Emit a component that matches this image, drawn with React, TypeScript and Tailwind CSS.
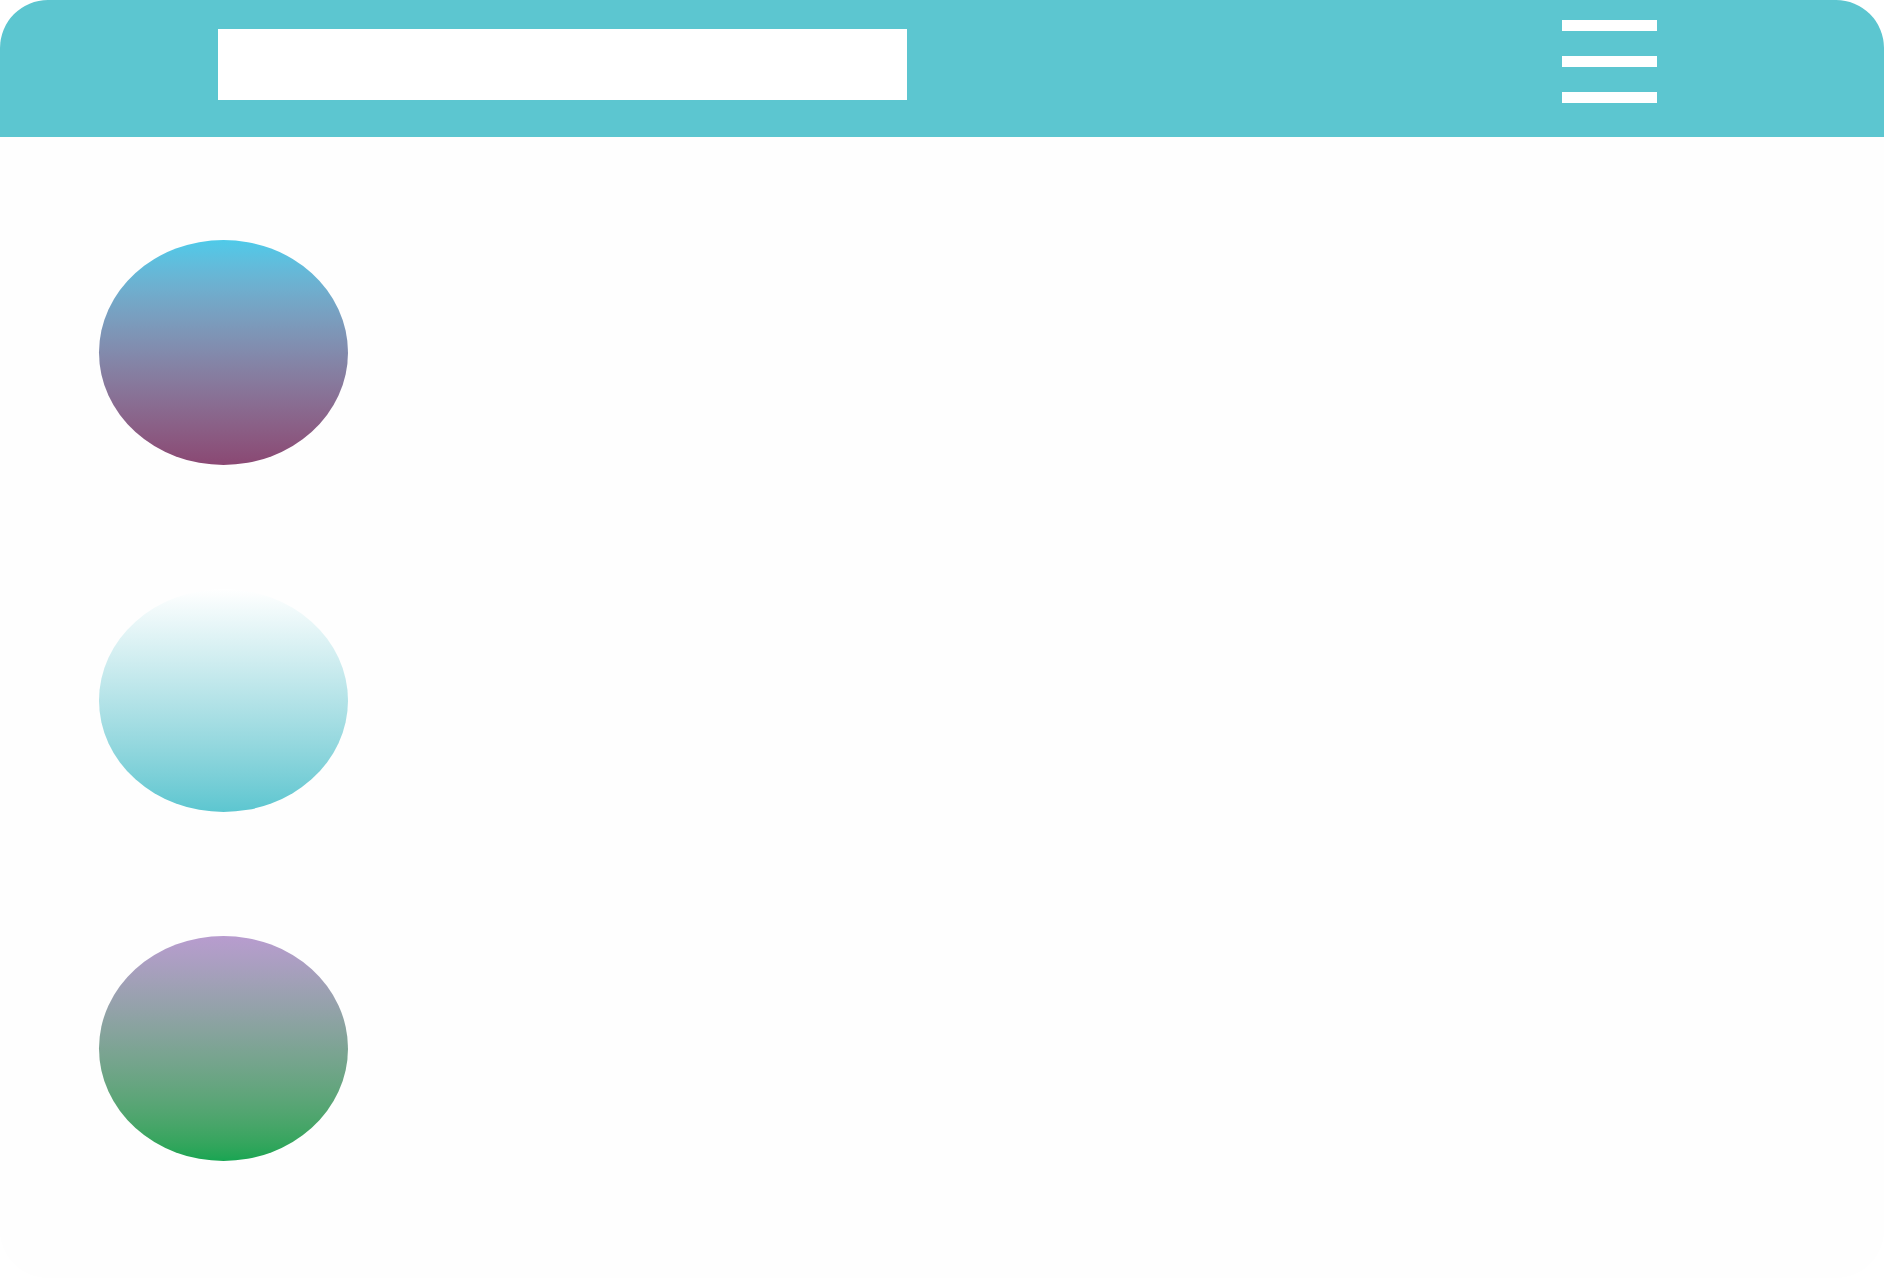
export default function App() {
  return (
    <div className="w-[1884px] h-[1278px] bg-white">
      <div className="w-full h-full rounded-[48px] overflow-hidden bg-[#fefefe] flex flex-col">
        {/* Header */}
        <header className="h-[137px] shrink-0 bg-[#5cc6d0] flex items-start pl-[218px] pr-[227px]">
          <div className="mt-[29px] w-[689px] h-[71px] bg-white"></div>
          <div className="ml-auto mt-[20px] w-[95px] flex flex-col gap-[25px]">
            <div className="h-[11px] bg-white"></div>
            <div className="h-[11px] bg-white"></div>
            <div className="h-[11px] bg-white"></div>
          </div>
        </header>

        {/* Blobs */}
        <div className="flex flex-col gap-[124px] pl-[99px] pt-[103px]">
          <div className="w-[249px] h-[225px] rounded-[50%] bg-gradient-to-b from-[#4ecae9] to-[#8a4873]"></div>
          <div className="w-[249px] h-[223px] rounded-[50%] bg-gradient-to-b from-[#ffffff] to-[#5cc6d0]"></div>
          <div className="w-[249px] h-[225px] rounded-[50%] bg-gradient-to-b from-[#b89ccf] to-[#17a552]"></div>
        </div>
      </div>
    </div>
  );
}
